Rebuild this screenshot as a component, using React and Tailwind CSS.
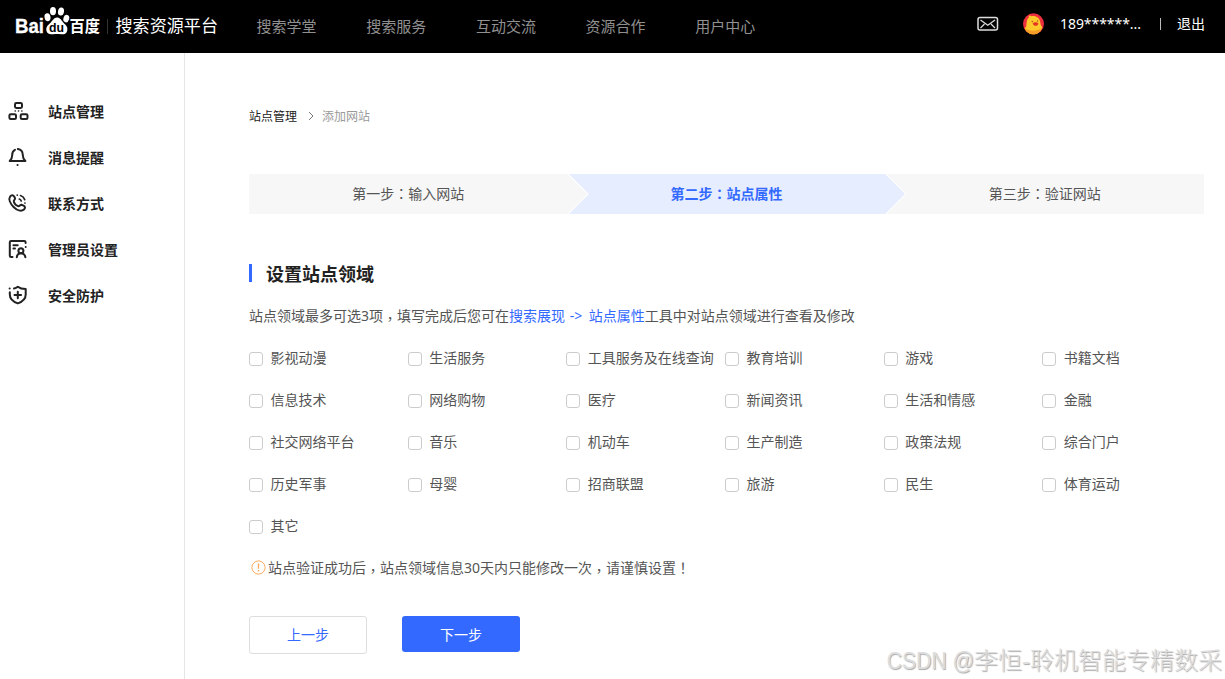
import React, { useState } from "react";

const navItems = ["搜索学堂", "搜索服务", "互动交流", "资源合作", "用户中心"];

const fields = [
  "影视动漫", "生活服务", "工具服务及在线查询", "教育培训", "游戏", "书籍文档",
  "信息技术", "网络购物", "医疗", "新闻资讯", "生活和情感", "金融",
  "社交网络平台", "音乐", "机动车", "生产制造", "政策法规", "综合门户",
  "历史军事", "母婴", "招商联盟", "旅游", "民生", "体育运动",
  "其它",
];

// Full width punctuation, centred in its box
const P = ({ children }) => (
  <span className="font-['Noto_Sans_CJK_TC',sans-serif]">{children}</span>
);

const Comma = () => (
  <span className="relative top-[3px] font-['Noto_Sans_CJK_TC',sans-serif]">，</span>
);

const Icon = ({ children }) => (
  <svg
    width="22"
    height="22"
    viewBox="0 0 22 22"
    fill="none"
    stroke="#222"
    strokeWidth="2"
    strokeLinecap="round"
    strokeLinejoin="round"
  >
    {children}
  </svg>
);

const menu = [
  {
    label: "站点管理",
    icon: (
      <Icon>
        <rect x="8" y="2.1" width="7" height="4.8" rx="1.3" />
        <rect x="2.4" y="13.2" width="6.6" height="4.8" rx="1.3" />
        <rect x="13.7" y="13.2" width="6.8" height="4.8" rx="1.3" />
        <path d="M8.2 10h.1M11.5 10h.1M14.8 10h.1" strokeWidth="1.6" />
      </Icon>
    ),
  },
  {
    label: "消息提醒",
    icon: (
      <Icon>
        <path d="M8 2.8C6 3.8 5.2 5.5 5.2 7.9c0 2.8-.4 4.2-2.5 6.1H18.4c-2.1-1.9-2.6-3.3-2.6-6.1 0-3.2-1.8-5.3-5-5.9" />
        <path d="M10.5 18h.1" />
      </Icon>
    ),
  },
  {
    label: "联系方式",
    icon: (
      <Icon>
        <path d="M3.1 3.5c1.3-1.8 3-1.7 4.1 0l.8 1.6c.6 1.5-1.7 2-1.2 3.6.6 1.9 2.5 3.8 4.4 4.4 1.5.4 2-1.8 3.5-1.3l1.9.9c1.6.9 1.9 2.4.4 3.7-2.8 2.5-7.1.9-10.4-2.4S1.3 6.2 3.1 3.5z" />
        <path d="M12.3 6c1 .3 1.6 1 1.9 2M13.5 2.5c2.1.7 3.5 2.1 4.2 4.1M10.2 2.1h.1M17.9 10h.1" strokeWidth="1.7" />
      </Icon>
    ),
  },
  {
    label: "管理员设置",
    icon: (
      <Icon>
        <path d="M18.6 4V3.3c0-.9-.4-1.3-1.3-1.3H4.1c-.9 0-1.3.4-1.3 1.3v13.5c0 .8.4 1.3 1.3 1.3h1.4" />
        <path d="M6.4 6.2h4.3M6.4 9.5H8M18.7 8v.1" />
        <circle cx="13.9" cy="11.7" r="2.5" />
        <path d="M9.8 18.2c.3-2.5 1.8-4 4.1-4s4 1.5 4.5 4" />
      </Icon>
    ),
  },
  {
    label: "安全防护",
    icon: (
      <Icon>
        <path d="M7 3.5c1.5-.2 2.7-.8 3.8-1.7 2.1 1.7 4.5 2.3 7.9 2.3v5.5c0 4-2.8 7.1-7.9 8.8-5.1-1.7-8-4.8-8-8.8V7.3M2.6 3.5h.1" />
        <path d="M10.8 6.7v6.6M7.5 10h6.6" />
      </Icon>
    ),
  },
];

const Logo = () => (
  <svg width="210" height="40" viewBox="0 0 210 40" fill="#fff">
    <text x="0" y="33.2" textLength="29" lengthAdjust="spacingAndGlyphs" stroke="#fff" strokeWidth=".3" className="font-['Liberation_Sans',sans-serif] text-[19.5px] font-bold">
      Bai
    </text>
    <ellipse cx="32.5" cy="17.2" rx="3" ry="4" transform="rotate(-8 32.5 17.2)" />
    <ellipse cx="38" cy="11.2" rx="3" ry="4.1" />
    <ellipse cx="46" cy="11.5" rx="3" ry="4.1" transform="rotate(10 46 11.5)" />
    <ellipse cx="51.3" cy="18.6" rx="2.9" ry="3.8" transform="rotate(15 51.3 18.6)" />
    <path d="M42 17.5c3 0 4.2 2.6 6.3 5 2.3 2.5 4.6 4.1 4 7.7-.6 3.6-3.3 4.4-6.2 4-2.6-.4-5.2-.4-7.8 0-3.6.5-6.6-.5-7-4.5-.3-3.1 2.1-5 4.5-7.3 2-2 3.2-4.9 6.2-4.9z" />
    <text x="34" y="31.6" fill="#000" textLength="15" lengthAdjust="spacingAndGlyphs" className="font-['Liberation_Sans',sans-serif] text-[12.5px] font-bold">
      du
    </text>
    <text x="54.5" y="32.4" textLength="30.5" lengthAdjust="spacingAndGlyphs" className="font-['Noto_Sans_CJK_SC',sans-serif] text-[16px] font-bold">
      百度
    </text>
    <rect x="92" y="19" width="1" height="15" fill="#333" />
    <text x="100.5" y="32.2" textLength="102.5" lengthAdjust="spacingAndGlyphs" className="font-['Noto_Sans_CJK_SC',sans-serif] text-[17px]">
      搜索资源平台
    </text>
  </svg>
);

const Header = () => (
  <header className="flex h-[53px] bg-black">
    <div className="w-[256.5px] shrink-0 pl-[15px]">
      <Logo />
    </div>
    <nav className="flex h-[53px] flex-1 items-center gap-[49.7px] text-[15px] text-[#909090]">
      {navItems.map((item) => (
        <a key={item} className="w-[60px] shrink-0 whitespace-nowrap">
          {item}
        </a>
      ))}
    </nav>
    <div className="flex h-[47px] items-center pr-5 text-[14px] text-white">
      <svg width="22" height="16" viewBox="0 0 22 16" fill="none" stroke="#ddd" strokeWidth="1.2" className="mr-6">
        <rect x="1" y="1.5" width="19.5" height="12.5" rx="2" strokeWidth="1.5" />
        <path d="M3.5 4l7.3 5.3L18 4M3.5 12l4-4M18 12l-4-4" />
      </svg>
      <svg width="22" height="22" viewBox="0 0 22 22" className="mr-[15px]">
        <circle cx="10.5" cy="10.8" r="10.5" fill="#ee2f3e" />
        <path d="M5.8 3.2c1-1.3 1.8-.6 2.3.1 4.2-1.2 8.2 1.3 9 5.2.5 2.4.5 4.3 2.2 5.4-1.2 4.4-4.7 7.4-8.7 7.4-4 0-7.4-2-8.9-6 2.4-1.5 1.4-3.8 2-6.2.4-2 .6-3.4 2.1-4.3z" fill="#ffc92c" />
        <path d="M2 15c3 3.5 12.4 3.7 17.1 0-1.3 3.8-4.5 6.3-8.5 6.3S3.4 19 2 15z" fill="#f59b27" />
        <circle cx="9.3" cy="8.6" r=".8" fill="#a85a1b" />
        <circle cx="14.6" cy="8" r=".7" fill="#a85a1b" />
        <path d="M9.7 10.4c1.5-1.4 4.2-1.4 5.7 0-.6 2.9-4.4 3.6-5.7 0z" fill="#e43223" />
      </svg>
      <span className="w-[81px] whitespace-nowrap tracking-[-0.05px]">189******...</span>
      <span className="ml-[19px] mr-[16px] h-3 w-px bg-[#bbb]" />
      <a>退出</a>
    </div>
  </header>
);

const Sidebar = () => (
  <aside className="w-[185px] shrink-0 border-r border-[#e5e5e5] pt-[35px]">
    {menu.map((item) => (
      <div key={item.label} className="flex h-[46px] items-center pl-[7px] text-[14px] font-bold text-[#222]">
        <span className="mr-[19px] pt-0.5">{item.icon}</span>
        {item.label}
      </div>
    ))}
  </aside>
);

const Steps = () => (
  <div className="relative mt-[47px] grid h-10 grid-cols-3 items-center bg-[#f7f7f7] pb-0.5 text-center text-[14px] text-[#555]">
    <svg className="absolute inset-0" width="955" height="40" viewBox="0 0 955 40">
      <path d="M320 0h316l20 20-20 20H320l20-20z" fill="#e6edfe" />
      <path d="M319 0l20 20-20 20M637 0l20 20-20 20" fill="none" stroke="#fff" />
    </svg>
    <span className="relative">第一步<P>：</P>输入网站</span>
    <span className="relative font-bold text-[#3369ff]">第二步<P>：</P>站点属性</span>
    <span className="relative">第三步<P>：</P>验证网站</span>
  </div>
);

const App = () => {
  const [selected, setSelected] = useState([]);

  // At most three fields can be picked
  const toggle = (name) => {
    if (selected.includes(name)) {
      setSelected(selected.filter((s) => s !== name));
    } else if (selected.length < 3) {
      setSelected([...selected, name]);
    }
  };

  return (
    <div className="relative flex h-[679px] w-[1225px] flex-col overflow-hidden bg-white font-['Noto_Sans','Noto_Sans_CJK_SC',sans-serif]">
      <Header />
      <div className="flex flex-1">
        <Sidebar />
        <main className="w-[1019px] pl-16 pt-[54px] text-[14px] leading-5 text-[#555]">
          <div className="flex h-5 items-center text-[12px]">
            <span className="text-[#222]">站点管理</span>
            <svg width="8" height="10" viewBox="0 0 8 10" fill="none" stroke="#777" className="-mt-0.5 ml-[10px] mr-[7px]">
              <path d="M2 1l4 4-4 4" />
            </svg>
            <span className="text-[#999]">添加网站</span>
          </div>
          <Steps />
          <div className="mt-[50px] flex h-[18px] items-center border-l-[3px] border-[#3369ff] pl-[14px]">
            <h2 className="pt-0.5 text-[18px] font-bold text-[#222]">设置站点领域</h2>
          </div>
          <p className="mt-[23px] whitespace-nowrap">
            站点领域最多可选3项<Comma />填写完成后您可在
            <a className="text-[#3369ff]">
              搜索展现<span className="ml-px mr-[3px]"> -&gt; </span>站点属性
            </a>
            工具中对站点领域进行查看及修改
          </p>
          <div className="mt-[22px] grid w-[952px] grid-cols-6 gap-y-[22px]">
            {fields.map((name) => (
              <label key={name} className="flex h-5 items-center whitespace-nowrap">
                <input
                  type="checkbox"
                  checked={selected.includes(name)}
                  onChange={() => toggle(name)}
                  className="mr-[7.5px] mt-0.5 size-3.5 shrink-0 appearance-none rounded-[3px] border border-[#ccc] bg-white checked:bg-[#3369ff]"
                />
                {name}
              </label>
            ))}
          </div>
          <div className="mt-[21px] flex h-5 items-center pl-[2px]">
            <svg width="15" height="15" viewBox="0 0 15 15" fill="none" stroke="#fdab61" className="mr-[2px] mt-px">
              <circle cx="7.5" cy="7.5" r="6.6" />
              <path d="M7.5 3.5v5.2M7.5 10v1.4" strokeWidth="1.4" />
            </svg>
            <span>
              站点验证成功后<Comma />站点领域信息30天内只能修改一次<Comma />请谨慎设置<P>！</P>
            </span>
          </div>
          <div className="mt-[39px] flex items-start gap-[35px]">
            <button className="h-[38px] w-[118px] rounded-[3px] border border-[#ddd] text-[#3369ff]">上一步</button>
            <button className="h-9 w-[118px] rounded-[3px] bg-[#3369ff] pt-0.5 text-white">下一步</button>
          </div>
        </main>
      </div>
      <div className="absolute -bottom-0.5 right-[3px] whitespace-nowrap font-['Liberation_Sans','Noto_Sans_CJK_SC',sans-serif] text-[24px] font-light leading-10 text-[#ddd] [text-shadow:1px_1px_1px_#aaa]">
        <span className="inline-block origin-right scale-x-[.9] text-[23.5px] -ml-2">CSDN @</span>李恒-聆机智能专精数采
      </div>
    </div>
  );
};

export default App;
